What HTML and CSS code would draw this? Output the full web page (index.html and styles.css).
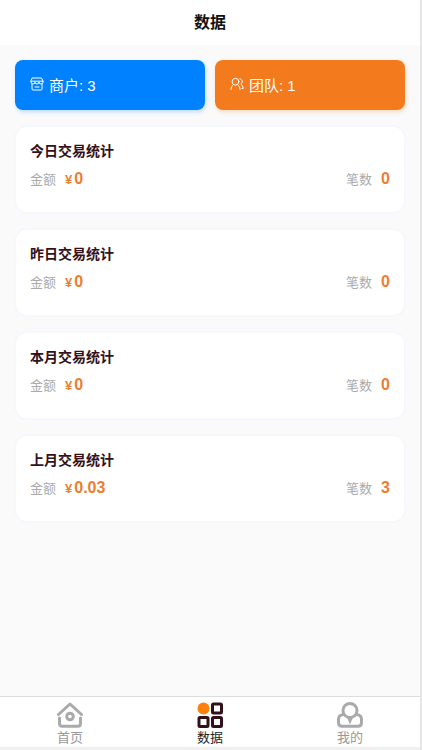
FILE: index.html
```html
<!DOCTYPE html>
<html lang="zh-CN">
<head>
	<meta charset="UTF-8">
	<meta name="viewport" content="width=device-width, initial-scale=1">
	<title>数据</title>
	<link rel="stylesheet" href="styles.css">
</head>
<body>
	<div class="page">
		<header class="navbar">
			<h1>数据</h1>
		</header>

		<main class="content">
			<div class="summary">
				<a href="#merchants" class="tile tile-blue">
					<svg viewBox="0 0 14 14" width="14" height="14">
						<path d="M2.500 1h9l1.500 3v1a2 2 0 0 1-4 0 2 2 0 0 1-4 0 2 2 0 0 1-4 0V4zM1 4.200h12M2 7v5c0 .6.400 1 1 1h8c.6 0 1-.4 1-1V7M5 10h4"/>
					</svg>
					<span>商户: 3</span>
				</a>
				<a href="#team" class="tile tile-orange">
					<svg viewBox="0 0 14 14" width="14" height="14">
						<circle cx="5.500" cy="4.700" r="3.400"/>
						<path d="M1 12.500c.1-2.400 1-4 2.600-5M10 12.500c-.1-2.400-1-4-2.600-5M9.800 1.700c2.900.6 3.300 4 1 5.600 1.400.8 2.200 2.200 2.400 4.200h-1.200"/>
					</svg>
					<span>团队: 1</span>
				</a>
			</div>

			<section class="card">
				<h2>今日交易统计</h2>
				<div class="stats">
					<p><span class="label">金额</span><span class="unit">¥</span><b>0</b></p>
					<p><span class="label">笔数</span><b>0</b></p>
				</div>
			</section>
			<section class="card">
				<h2>昨日交易统计</h2>
				<div class="stats">
					<p><span class="label">金额</span><span class="unit">¥</span><b>0</b></p>
					<p><span class="label">笔数</span><b>0</b></p>
				</div>
			</section>
			<section class="card">
				<h2>本月交易统计</h2>
				<div class="stats">
					<p><span class="label">金额</span><span class="unit">¥</span><b>0</b></p>
					<p><span class="label">笔数</span><b>0</b></p>
				</div>
			</section>
			<section class="card">
				<h2>上月交易统计</h2>
				<div class="stats">
					<p><span class="label">金额</span><span class="unit">¥</span><b>0.03</b></p>
					<p><span class="label">笔数</span><b>3</b></p>
				</div>
			</section>
		</main>

		<nav class="tabbar">
			<a href="#home">
				<svg viewBox="0 0 26 26" width="26" height="26">
					<path d="M1.500 12.500 13 2l11.500 10.500M2.500 16v5.500c0 1.700 1 2.700 2.700 2.700h15.600c1.700 0 2.700-1 2.700-2.700V16"/>
					<circle cx="13" cy="14.500" r="3.300"/>
				</svg>
				<span>首页</span>
			</a>
			<a href="#data" class="active">
				<svg viewBox="0 0 26 26" width="26" height="26">
					<circle class="dot" cx="6.500" cy="6.500" r="6"/>
					<rect x="15.500" y="2" width="9" height="9" rx="1"/>
					<rect x="2" y="15.500" width="9" height="9" rx="1"/>
					<rect x="15.500" y="15.500" width="9" height="9" rx="1"/>
				</svg>
				<span>数据</span>
			</a>
			<a href="#mine">
				<svg viewBox="0 0 26 26" width="26" height="26">
					<circle cx="13" cy="8.500" r="7"/>
					<path d="M6.500 12.500c-3.200.3-5 2.200-5 5v3.200c0 2.200 1.300 3.600 3.500 3.600h16c2.200 0 3.500-1.400 3.500-3.600v-3.200c0-2.800-1.800-4.700-5-5"/>
					<path class="tie" d="M10 15.500h6L13 22.500z"/>
				</svg>
				<span>我的</span>
			</a>
		</nav>
	</div>
</body>
</html>
```

FILE: styles.css
```css
* {
	box-sizing: border-box;
}

body {
	margin: 0;
	background: #eee;
	font-family: "Liberation Sans", "Noto Sans CJK SC", sans-serif;
}

h1,
h2,
p {
	margin: 0;
}

a {
	color: inherit;
	text-decoration: none;
}

svg {
	fill: none;
	stroke: currentColor;
	stroke-linecap: round;
	stroke-linejoin: round;
}

.page {
	display: flex;
	flex-direction: column;
	min-height: 100vh;
	padding-bottom: 3px;
	border-right: 2px solid #e6e6e6;
	background: #f0f0f0;
}

.navbar {
	display: flex;
	align-items: center;
	justify-content: center;
	height: 45px;
	background: #fff;
}

.navbar h1 {
	font-size: 16px;
	line-height: 24px;
	color: #111;
}

.content {
	flex: 1;
	padding: 15px;
	background: #fafafa;
}

/* merchant and team counters */
.summary {
	display: flex;
	gap: 10px;
	margin-bottom: 16px;
}

.tile {
	display: flex;
	flex: 1;
	align-items: center;
	gap: 5px;
	height: 50px;
	padding: 0 15px 2px;
	border-radius: 8px;
	font-size: 15px;
	color: #fff;
}

.tile-blue {
	background: #0081ff;
	box-shadow: 1px 2px 4px rgba(0, 129, 255, .25);
}

.tile-orange {
	background: #f37b1d;
	box-shadow: 1px 2px 4px rgba(243, 123, 29, .25);
}

/* statistics */
.card {
	height: 87px;
	margin-bottom: 16px;
	padding: 13px 14px;
	border: 1px solid #f5f8fe;
	border-radius: 12px;
	background: #fff;
	box-shadow: 0 0 2px #eef3fc;
}

.card h2 {
	font-size: 14px;
	line-height: 22px;
	color: #33111a;
}

.stats {
	display: flex;
	justify-content: space-between;
	margin-top: 5px;
}

.stats p {
	display: flex;
	align-items: baseline;
	line-height: 24px;
	color: #ed7d31;
}

.stats .label {
	margin-right: 9px;
	font-size: 13px;
	color: #aaa;
}

.stats .unit {
	margin-right: 2px;
	font-size: 13px;
	font-weight: bold;
}

.stats b {
	font-size: 16px;
}

/* bottom tabs */
.tabbar {
	display: flex;
	height: 51px;
	border-top: 1px solid #ddd;
	background: #fff;
}

.tabbar a {
	display: flex;
	flex: 1;
	flex-direction: column;
	align-items: center;
	padding-top: 5px;
	font-size: 13px;
	line-height: 20px;
	color: #999;
}

.tabbar svg {
	flex-shrink: 0;
	stroke: #aaa;
	stroke-width: 3;
}

.tabbar .active {
	color: #222;
}

.tabbar .active svg {
	stroke: #33111a;
}

.tabbar .dot {
	fill: #ff8010;
	stroke: none;
}

.tabbar .tie {
	fill: #aaa;
	stroke: none;
}
```
